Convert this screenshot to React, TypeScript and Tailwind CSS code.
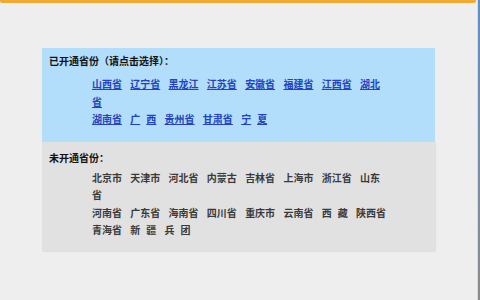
import React from "react";

const opened: string[][] = [
  ["山西省"], ["辽宁省"], ["黑龙江"], ["江苏省"], ["安徽省"], ["福建省"], ["江西省"], ["湖北省"],
  ["湖南省"], ["广", "西"], ["贵州省"], ["甘肃省"], ["宁", "夏"],
];
const closed: string[][] = [
  ["北京市"], ["天津市"], ["河北省"], ["内蒙古"], ["吉林省"], ["上海市"], ["浙江省"], ["山东省"],
  ["河南省"], ["广东省"], ["海南省"], ["四川省"], ["重庆市"], ["云南省"], ["西", "藏"], ["陕西省"],
  ["青海省"], ["新", "疆"], ["兵", "团"],
];

function Item({ parts }: { parts: string[] }) {
  if (parts.length === 1) return <>{parts[0]}</>;
  return (
    <>
      {parts[0]}
      <span className="ml-[6px]">{parts[1]}</span>
    </>
  );
}

export default function App() {
  return (
    <div className="relative w-[480px] h-[300px] bg-[#eeeeee] overflow-hidden font-['Liberation_Sans','Noto_Sans_CJK_SC',sans-serif]">
      <div className="absolute left-0 top-0 w-[476px] h-[2.5px] bg-[#f2a934] rounded-bl-[2px] rounded-br-[2px]" />
      <div className="absolute right-0 top-0 w-[2px] h-[300px] bg-gradient-to-b from-[#5f8fc4] to-[#8a8a8a]" />
      <div className="absolute right-[2px] top-0 w-[1px] h-[300px] bg-[#dcdcdc]" />

      <div className="pt-[48px] pl-[42px] w-[435px]">
        <div className="bg-[#b2ddfb] pt-[5px] pb-[13px] pl-[7px]">
          <div className="text-[10px] leading-[17px] font-bold text-[#111]">
            已开通省份（请点击选择）：
          </div>
          <div className="mt-[6px] ml-[43px] w-[294px] text-[10px] leading-[17.5px] font-semibold [word-spacing:5.5px]">
            {opened.map((p, i) => (
              <React.Fragment key={i}>
                <a className="text-[#2343c0] underline [word-spacing:0]">
                  <Item parts={p} />
                </a>
                {i === 7 ? <br /> : " "}
              </React.Fragment>
            ))}
          </div>
        </div>
        <div className="bg-[#e1e1e1] pt-[8px] pb-[12px] pl-[7px] shadow-[1px_1px_1px_rgba(0,0,0,0.06)]">
          <div className="text-[10px] leading-[17px] font-bold text-[#111]">未开通省份：</div>
          <div className="mt-[3.5px] ml-[43px] w-[294px] text-[10px] leading-[17.3px] font-bold text-[#3a3a3a] [word-spacing:5.5px]">
            {closed.map((p, i) => (
              <React.Fragment key={i}>
                <span className="[word-spacing:0]">
                  <Item parts={p} />
                </span>
                {i === 7 ? <br /> : " "}
              </React.Fragment>
            ))}
          </div>
        </div>
      </div>
    </div>
  );
}
